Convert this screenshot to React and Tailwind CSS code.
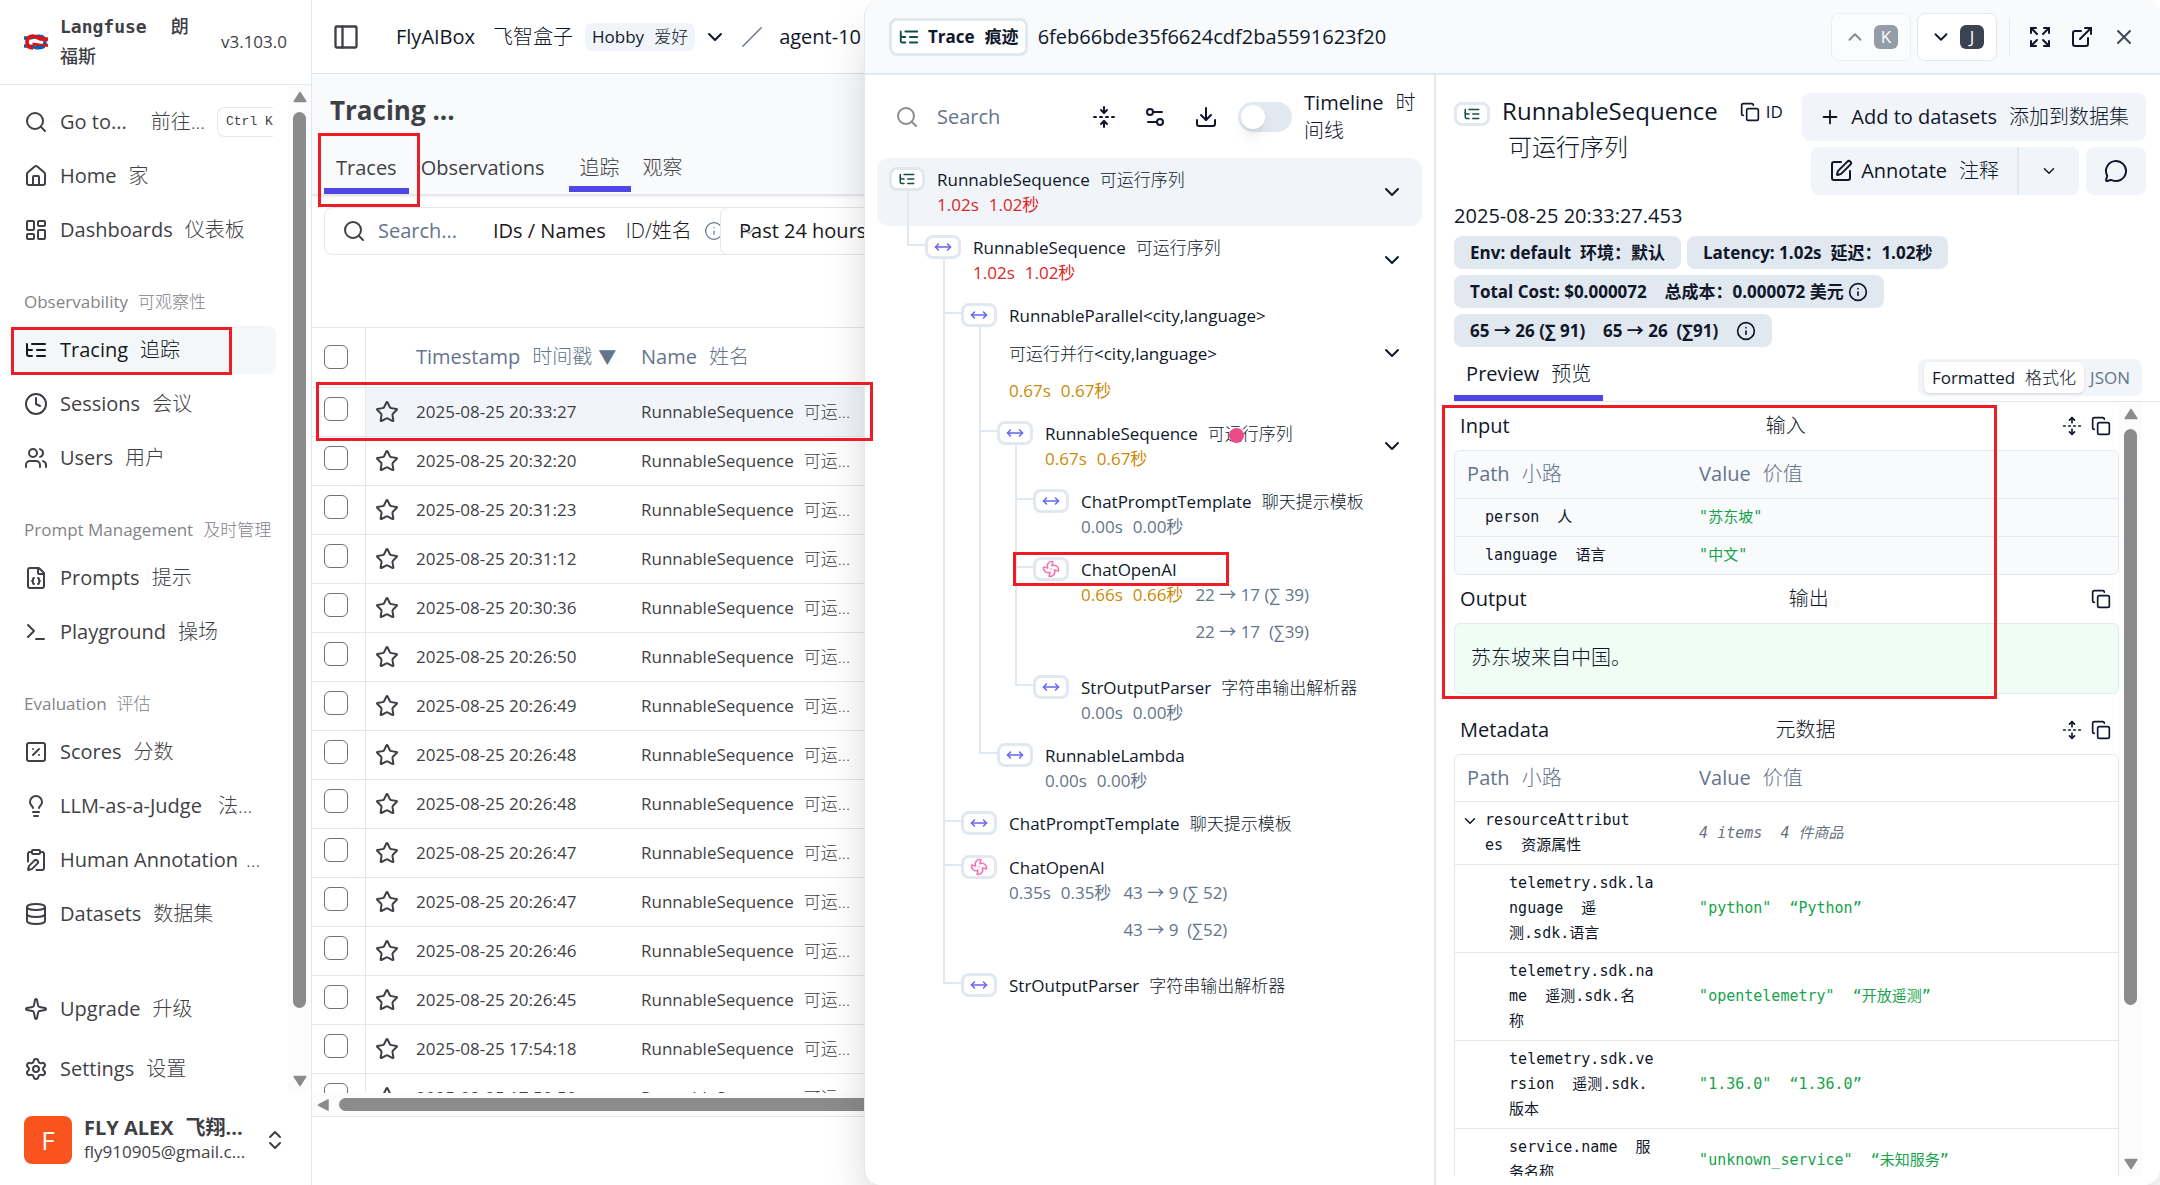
import React from "react";
import {
  Search, House, LayoutDashboard, Clock, Users, FileJson, Terminal, SquarePercent, Lightbulb,
  ClipboardPen, Database, Sparkle, Settings, ChevronsUpDown, PanelLeft, ChevronDown, ChevronUp,
  Slash, Star, FoldVertical, UnfoldVertical, Settings2, Download, Copy, Expand, ExternalLink, X,
  Plus, SquarePen, MessageCircle, Info, MoveHorizontal, Fan,
} from "lucide-react";

function TreeIcon({ size = 24, strokeWidth = 2, className = "" }) {
  return (
    <svg width={size} height={size} viewBox="0 0 24 24" fill="none" stroke="currentColor" strokeWidth={strokeWidth} strokeLinecap="round" strokeLinejoin="round" className={"shrink-0 " + className} aria-hidden="true">
      <path d="M21 12h-8" />
      <path d="M21 6H8" />
      <path d="M21 18h-8" />
      <path d="M3 6v4c0 1.1.9 2 2 2h3" />
      <path d="M3 10v6c0 1.1.9 2 2 2h3" />
    </svg>
  );
}

function Logo() {
  return (
    <svg width="24" height="16" viewBox="0 0 24 16" fill="none" className="shrink-0" aria-hidden="true">
      <path d="M0 4h3.500C10 4 10 2.200 15 2.200c4 0 6 2.300 6 5.800s-2 5.800-6 5.800C10 13.800 10 12 3.500 12H0" stroke="#0f5fae" strokeWidth="3.600" />
      <path d="M24 5.200h-4.500C14 5.200 13 2.200 9 2.200 5 2.200 3 4.500 3 8s2 5.800 6 5.800" stroke="#e11312" strokeWidth="3.800" />
      <path d="M8.500 10.200C12 9.600 13 10.800 16 11.200h8" stroke="#e11312" strokeWidth="3" />
      <path d="M7 7.800h9" stroke="#fff" strokeWidth="1.600" />
      <path d="M12 13.600c3.500-.2 5.500-.8 7-2" stroke="#0f5fae" strokeWidth="2.600" />
    </svg>
  );
}

function Bi({ en, zh, gap = "ml-3", weight = "font-light" }) {
  return (
    <span className="whitespace-nowrap">
      <span>{en}</span>
      <span className={gap + " " + weight}>{zh}</span>
    </span>
  );
}

function Triangle({ dir }) {
  const d = {
    up: "M7 1.500 12.800 10.500H1.200Z",
    down: "M7 10.500 1.200 1.500h11.600Z",
    left: "M1.500 6 11 .8v10.400Z",
  }[dir];
  return (
    <svg width="14" height="12" viewBox="0 0 14 12" className="shrink-0" aria-hidden="true">
      <path d={d} fill="#8b8b8b" stroke="#8b8b8b" strokeWidth="1.500" strokeLinejoin="round" />
    </svg>
  );
}

function VScroll({ thumb }) {
  return (
    <div className="flex w-[23px] shrink-0 flex-col items-center bg-[#fcfcfc] py-1.5">
      <Triangle dir="up" />
      <div className="flex w-full flex-1 justify-center pt-[9px]">
        <div className={"w-[13px] rounded-full bg-[#8b8b8b] " + thumb} />
      </div>
      <Triangle dir="down" />
    </div>
  );
}

function NavItem({ icon: Icon, en, zh, gap, active, kbd }) {
  return (
    <a href="#" className={"flex h-12 items-center gap-3 overflow-hidden rounded-lg px-3 text-[20px] " + (active ? "bg-[#f3f7fa] text-[#18181b]" : "text-[#3f3f46]") + (kbd ? " pr-0" : "")}>
      <Icon size={24} strokeWidth={2} className="shrink-0" />
      <Bi en={en} zh={zh} gap={gap} />
      {kbd && (
        <kbd className="flex h-[30px] shrink-0 items-center whitespace-nowrap rounded-l-lg border border-r-0 border-[#e2e8f0] pl-2 font-['Liberation_Mono',monospace] text-[13px]">Ctrl K</kbd>
      )}
    </a>
  );
}

function GroupLabel({ en, zh }) {
  return <div className="flex h-12 items-center px-3 text-[17px] text-[#838387]"><Bi en={en} zh={zh} gap="ml-2.5" /></div>;
}

function Sidebar() {
  return (
    <aside className="flex w-[312px] shrink-0 flex-col border-r border-[#e2e8f0] bg-white">
      <div className="flex h-[85px] shrink-0 items-center border-b border-[#e2e8f0] px-6">
        <Logo />
        <div className="ml-3 w-[140px] font-['DejaVu_Sans_Mono','Noto_Sans_CJK_SC',monospace] text-[18px] font-bold leading-[30px] text-[#3f3f46]">
          Langfuse<span className="ml-6 font-medium">朗</span><br /><span className="font-medium">福斯</span>
        </div>
        <span className="ml-[21px] text-[17px] text-[#3f3f46]">v3.103.0</span>
      </div>
      <div className="flex min-h-0 flex-1">
        <nav className="flex min-w-0 flex-1 flex-col pl-3 pr-3 pt-[13px]">
          <div className="flex flex-col gap-1.5">
            <NavItem icon={Search} en="Go to..." zh="前往..." gap="ml-6" kbd />
            <NavItem icon={House} en="Home" zh="家" />
            <NavItem icon={LayoutDashboard} en="Dashboards" zh="仪表板" />
          </div>
          <div className="pt-6"><GroupLabel en="Observability" zh="可观察性" /></div>
          <div className="flex flex-col gap-1.5">
            <NavItem icon={TreeIcon} en="Tracing" zh="追踪" active />
            <NavItem icon={Clock} en="Sessions" zh="会议" />
            <NavItem icon={Users} en="Users" zh="用户" />
          </div>
          <div className="pt-6"><GroupLabel en="Prompt Management" zh="及时管理" /></div>
          <div className="flex flex-col gap-1.5">
            <NavItem icon={FileJson} en="Prompts" zh="提示" />
            <NavItem icon={Terminal} en="Playground" zh="操场" />
          </div>
          <div className="pt-6"><GroupLabel en="Evaluation" zh="评估" /></div>
          <div className="flex flex-col gap-1.5">
            <NavItem icon={SquarePercent} en="Scores" zh="分数" />
            <NavItem icon={Lightbulb} en="LLM-as-a-Judge" zh="法..." gap="ml-4" />
            <NavItem icon={ClipboardPen} en="Human Annotation" zh="..." gap="ml-2" weight="font-normal" />
            <NavItem icon={Database} en="Datasets" zh="数据集" />
          </div>
          <div className="mt-auto flex flex-col gap-3">
            <NavItem icon={Sparkle} en="Upgrade" zh="升级" />
            <NavItem icon={Settings} en="Settings" zh="设置" />
          </div>
        </nav>
        <VScroll thumb="h-[93%]" />
      </div>
      <div className="flex h-[92px] shrink-0 items-center pl-6 pr-6 pt-0.5">
        <div className="flex size-12 items-center justify-center rounded-lg bg-[#f9531e] text-[26px] text-white">F</div>
        <div className="ml-3 text-[#3f3f46]">
          <div className="text-[20px] font-bold leading-6"><Bi en="FLY ALEX" zh="飞翔..." weight="font-bold" /></div>
          <div className="text-[17px] leading-6">fly910905@gmail.c...</div>
        </div>
        <ChevronsUpDown size={24} className="ml-auto text-[#3f3f46]" />
      </div>
    </aside>
  );
}

const TIMES = [
  "2025-08-25 20:33:27", "2025-08-25 20:32:20", "2025-08-25 20:31:23", "2025-08-25 20:31:12",
  "2025-08-25 20:30:36", "2025-08-25 20:26:50", "2025-08-25 20:26:49", "2025-08-25 20:26:48",
  "2025-08-25 20:26:48", "2025-08-25 20:26:47", "2025-08-25 20:26:47", "2025-08-25 20:26:46",
  "2025-08-25 20:26:45", "2025-08-25 17:54:18", "2025-08-25 17:50:50",
];

function Check({ label }) {
  return <input type="checkbox" aria-label={label} className="block size-6 appearance-none rounded-md border border-[#71717a] bg-white" />;
}

function Main() {
  return (
    <main className="flex min-w-0 flex-1 flex-col overflow-hidden bg-white">
      <header className="flex h-[74px] shrink-0 items-center border-b border-[#e2e8f0] pl-5 text-[20px] text-[#0f172a]">
        <button aria-label="Toggle sidebar" className="text-[#3f3f46]"><PanelLeft size={28} strokeWidth={2} className="[&_rect]:[rx:1]" /></button>
        <span className="ml-9"><Bi en="FlyAIBox" zh="飞智盒子" gap="ml-[18px]" /></span>
        <span className="ml-3 flex h-7 items-center rounded-lg bg-[#f1f5f9] px-[7px] text-[17px]"><Bi en="Hobby" zh="爱好" gap="ml-2.5" /></span>
        <ChevronDown size={24} className="ml-2" />
        <Slash size={22} strokeWidth={1.500} className="ml-3.5 text-[#64748b]" />
        <span className="ml-4 whitespace-nowrap">agent-10</span>
      </header>
      <div className="flex h-[121px] shrink-0 flex-col justify-between border-b border-[#e2e8f0] bg-[#f8fafc] pl-3 pt-[18px] shadow-sm">
        <h1 className="pl-1.5 text-[26px] font-bold leading-9 text-[#3f3f46]">Tracing ...</h1>
        <div className="flex h-[54px] text-[20px] text-[#3f3f46]">
          <button className="border-b-[6px] border-[#4f46e5] px-3 pt-[7px]">Traces</button>
          <button className="border-b-[6px] border-transparent px-3 pt-[7px]">Observations</button>
          <button className="ml-3 h-[52px] border-b-[6px] border-[#4f46e5] px-[11px] pt-[9px] font-light">追踪</button>
          <button className="h-[52px] border-b-[6px] border-transparent px-3 pt-[9px] font-light">观察</button>
        </div>
      </div>
      <div className="flex h-[132px] shrink-0 items-start pl-3 pt-3">
        <div className="flex h-12 w-[420px] shrink-0 items-center rounded-l-lg border border-[#e2e8f0] pl-[17px] text-[20px] text-[#18181b]">
          <Search size={24} className="shrink-0 text-[#3f3f46]" />
          <input aria-label="Search traces" placeholder="Search..." className="ml-3 w-[115px] bg-transparent outline-none placeholder:text-[#64748b]" />
          <Bi en="IDs / Names" zh="ID/姓名" gap="ml-5" />
          <Info size={20} strokeWidth={1.500} className="ml-3 shrink-0 text-[#64748b]" />
        </div>
        <button className="relative -ml-6 flex h-12 w-[260px] items-center rounded-l-lg border border-[#e2e8f0] bg-white pl-[18px] text-[20px] text-[#18181b]">
          <ChevronDown size={20} className="absolute left-[18px] text-[#a1a1aa]" />
          <span className="relative">Past 24 hours</span>
        </button>
      </div>
      <div className="h-[766px] shrink-0 overflow-hidden border-t border-[#e2e8f0]">
        <table className="w-full table-fixed border-collapse">
          <thead>
            <tr className="h-[59px] border-b border-[#e2e8f0] text-left text-[20px] text-[#64748b]">
              <th className="w-[53px] border-r border-[#e2e8f0] pl-3"><Check label="Select all" /></th>
              <th className="w-[51px]" aria-label="Bookmark" />
              <th className="w-[225px] whitespace-nowrap font-normal"><Bi en="Timestamp" zh="时间戳" /><span className="ml-1.5 text-[18px]">▼</span></th>
              <th className="font-normal"><Bi en="Name" zh="姓名" /></th>
            </tr>
          </thead>
          <tbody>
            {TIMES.map((t, i) => (
              <tr key={i} className="h-[49px] border-b border-[#e2e8f0] text-[17px] text-[#3f3f46]">
                <td className="border-r border-[#e2e8f0] pb-1.5 pl-3"><Check label={"Select trace " + t} /></td>
                <td className={"pl-[9px] " + (i === 0 ? "bg-[#f1f5f9]" : "")}><button aria-label="Bookmark trace" className="block"><Star size={24} /></button></td>
                <td className={i === 0 ? "bg-[#f1f5f9]" : ""}>{t}</td>
                <td className={i === 0 ? "bg-[#f1f5f9]" : ""}><Bi en="RunnableSequence" zh="可运..." gap="ml-2.5" /></td>
              </tr>
            ))}
          </tbody>
        </table>
      </div>
      <div className="flex h-6 shrink-0 items-center gap-2 border-b border-[#e2e8f0] bg-[#fcfcfc] pl-[5px]">
        <Triangle dir="left" />
        <div className="h-[13px] flex-1 rounded-full bg-[#8b8b8b]" />
      </div>
    </main>
  );
}

const RED = "text-[#dc2626]";
const AMBER = "text-[#ca8a04]";
const GRAY = "text-[#64748b]";

/* Guides: "|" passes through, "+" branches, "L" ends, " " is empty. */
const NODES = [
  { g: "", kind: "trace", en: "RunnableSequence", zh: "可运行序列", t: "1.02", c: RED, kids: true, sel: true },
  { g: "L", en: "RunnableSequence", zh: "可运行序列", t: "1.02", c: RED, kids: true },
  { g: " +", en: "RunnableParallel<city,language>", below: ["可运行并行", "<city,language>"], t: "0.67", c: AMBER, kids: true },
  { g: " |+", en: "RunnableSequence", zh: "可运行序列", t: "0.67", c: AMBER, kids: true },
  { g: " ||+", en: "ChatPromptTemplate", zh: "聊天提示模板", t: "0.00", c: GRAY },
  { g: " ||+", kind: "gen", en: "ChatOpenAI", t: "0.66", c: AMBER, tok: ["22 → 17 (∑ 39)", "22 → 17  (∑39)"] },
  { g: " ||L", en: "StrOutputParser", zh: "字符串输出解析器", t: "0.00", c: GRAY },
  { g: " |L", en: "RunnableLambda", t: "0.00", c: GRAY },
  { g: " +", en: "ChatPromptTemplate", zh: "聊天提示模板" },
  { g: " +", kind: "gen", en: "ChatOpenAI", t: "0.35", c: GRAY, tok: ["43 → 9 (∑ 52)", "43 → 9  (∑52)"] },
  { g: " L", en: "StrOutputParser", zh: "字符串输出解析器" },
];

function Guide({ type }) {
  return (
    <div className="flex w-9 shrink-0 flex-col self-stretch pl-[18px]">
      {(type === "+" || type === "L") && <div className="h-5 border-b-2 border-l-2 border-[#e2e8f0]" />}
      {(type === "+" || type === "|") && <div className="flex-1 border-l-2 border-[#e2e8f0]" />}
    </div>
  );
}

function KindBadge({ kind }) {
  return (
    <span className="flex h-6 w-9 shrink-0 items-center justify-center rounded-lg border-[3px] border-[#e2e8f0] bg-white">
      {kind === "trace" ? <TreeIcon size={18} className="text-[#134e4a]" />
        : kind === "gen" ? <Fan size={18} className="text-[#f472b6]" />
        : <MoveHorizontal size={18} className="text-[#6366f1]" />}
    </span>
  );
}

function Node({ n }) {
  return (
    <li className={"flex rounded-xl pl-3 pr-[18px] text-[17px] text-[#0f172a] " + (n.sel ? "bg-[#f1f5f9]" : "")}>
      {[...n.g].map((t, i) => <Guide key={i} type={t} />)}
      <div className="flex w-9 shrink-0 flex-col pt-[9px]">
        <KindBadge kind={n.kind} />
        {n.kids && <div className="ml-[18px] flex-1 border-l-2 border-[#e2e8f0]" />}
      </div>
      <div className={"ml-3 flex-1 whitespace-nowrap pt-[9px] " + (n.tok ? "pb-[22px]" : "pb-[9px]")}>
        <div className="leading-[26px]">{n.zh ? <Bi en={n.en} zh={n.zh} gap="ml-2.5" /> : n.en}</div>
        {n.below && <div className="py-1.5 leading-[38px]"><span className="font-light">{n.below[0]}</span>{n.below[1]}</div>}
        {n.t && (
          <div className={"flex leading-6 " + n.c}>
            <Bi en={n.t + "s"} zh={n.t + "秒"} gap="ml-2.5" weight="font-normal" />
            {n.tok && (
              <div className={"ml-3 whitespace-pre " + GRAY}>
                <div>{n.tok[0]}</div>
                <div className="pt-[13px]">{n.tok[1]}</div>
              </div>
            )}
          </div>
        )}
      </div>
      {n.kids && <button aria-label={"Collapse " + n.en} className="self-center"><ChevronDown size={24} /></button>}
    </li>
  );
}

function TreePane() {
  return (
    <section className="flex w-[44.1%] shrink-0 flex-col border-r-2 border-[#e2e8f0] pl-3 pr-3">
      <div className="flex h-[83px] shrink-0 items-center pl-[18px] text-[20px] text-[#0f172a]">
        <Search size={24} className="shrink-0 text-[#8b8b92]" />
        <input aria-label="Search nodes" placeholder="Search" className="ml-[18px] w-0 min-w-0 flex-1 bg-transparent outline-none placeholder:text-[#64748b]" />
        <div className="flex items-center gap-[27px]">
          <button aria-label="Collapse all"><FoldVertical size={24} /></button>
          <button aria-label="View options"><Settings2 size={24} /></button>
          <button aria-label="Download"><Download size={24} /></button>
        </div>
        <input id="timeline" type="checkbox" role="switch" className="ml-5 h-[30px] w-[54px] shrink-0 appearance-none rounded-full bg-[#e2e8f0] before:ml-[3px] before:mt-[3px] before:block before:size-6 before:rounded-full before:bg-white before:shadow-lg before:content-['']" />
        <label htmlFor="timeline" className="ml-3 w-[118px] text-[20px] leading-7"><span>Timeline</span><span className="ml-3 font-light">时</span><br /><span className="font-light">间线</span></label>
      </div>
      <ul>{NODES.map((n, i) => <Node key={i} n={n} />)}</ul>
    </section>
  );
}

function Pill({ children }) {
  return <span className="flex h-[33px] items-center whitespace-pre rounded-lg bg-[#e2e8f0] px-4 text-[17px] font-bold text-[#0f172a]">{children}</span>;
}

function SectionHead({ en, zh, fold }) {
  return (
    <div className="flex h-12 items-center justify-between pl-1.5 pr-2 text-[20px]">
      <h3>{en}</h3>
      <span className="font-light">{zh}</span>
      <div className="flex gap-[9px]">
        {fold && <button aria-label={"Expand " + en}><UnfoldVertical size={20} /></button>}
        <button aria-label={"Copy " + en}><Copy size={20} /></button>
      </div>
    </div>
  );
}

function JsonTable({ rows, shade }) {
  return (
    <div className={"overflow-hidden rounded-md border border-[#e2e8f0] " + (shade ? "bg-[#f8fafc]" : "bg-white")}>
      <table className="w-full table-fixed border-collapse">
        <thead>
          <tr className="h-[47px] text-left text-[20px] text-[#64748b]">
            <th className="w-[35%] pl-3 font-normal"><Bi en="Path" zh="小路" /></th>
            <th className="pl-3 font-normal"><Bi en="Value" zh="价值" /></th>
          </tr>
        </thead>
        <tbody className="font-['DejaVu_Sans_Mono','Noto_Sans_CJK_SC',monospace] text-[15px] leading-[25px]">
          {rows.map((r, i) => (
            <tr key={i} className="border-t border-[#e2e8f0]">
              <td className={"whitespace-pre py-1.5 " + (r.deep ? "pl-[54px]" : "pl-[30px]")}>
                <div className="flex">
                  {r.open && <button aria-label="Collapse resourceAttributes" className="-ml-6 mr-1.5 self-start pt-1"><ChevronDown size={18} /></button>}
                  <span>{r.path}</span>
                </div>
              </td>
              <td className={"whitespace-pre pl-3 " + (r.muted ? "italic text-[#6b7280]" : "text-[#16a34a]")}>{r.value}</td>
            </tr>
          ))}
        </tbody>
      </table>
    </div>
  );
}

const INPUT = [
  { path: "person  人", value: "\"苏东坡\"" },
  { path: "language  语言", value: "\"中文\"" },
];
const META = [
  { path: "resourceAttribut\nes  资源属性", value: "4 items  4 件商品", muted: true, open: true },
  { path: "telemetry.sdk.la\nnguage  遥\n测.sdk.语言", value: "\"python\"  “Python”", deep: true },
  { path: "telemetry.sdk.na\nme  遥测.sdk.名\n称", value: "\"opentelemetry\"  “开放遥测”", deep: true },
  { path: "telemetry.sdk.ve\nrsion  遥测.sdk.\n版本", value: "\"1.36.0\"  “1.36.0”", deep: true },
  { path: "service.name  服\n务名称", value: "\"unknown_service\"  “未知服务”", deep: true },
];

function DetailPane() {
  const btn = "flex h-12 items-center bg-[#f1f5f9]";
  return (
    <section className="flex min-w-0 flex-1 flex-col pl-[18px] text-[#0f172a]">
      <div className="flex h-[127px] shrink-0 items-start pr-3.5 pt-[18px]">
        <div className="mt-[9px]"><KindBadge kind="trace" /></div>
        <h2 className="ml-3 text-[24px] leading-9">RunnableSequence<br /><span className="ml-1.5 font-light">可运行序列</span></h2>
        <button className="ml-[22px] mt-1.5 flex items-center gap-1.5 text-[17px]"><Copy size={20} />ID</button>
        <div className="ml-auto flex flex-col items-end gap-1.5">
          <button className={btn + " gap-2.5 rounded-lg px-[17px] text-[20px]"}><Plus size={22} /><Bi en="Add to datasets" zh="添加到数据集" /></button>
          <div className="flex gap-[7px]">
            <button className={btn + " gap-2 rounded-l-lg border-r-2 border-[#e2e8f0] px-[18px] text-[20px]"}><SquarePen size={24} /><Bi en="Annotate" zh="注释" /></button>
            <button aria-label="Annotation options" className={btn + " -ml-[7px] w-[60px] justify-center rounded-r-lg"}><ChevronDown size={18} /></button>
            <button aria-label="Comments" className={btn + " w-[60px] justify-center rounded-lg"}><MessageCircle size={24} /></button>
          </div>
        </div>
      </div>
      <div className="text-[20px] leading-7">2025-08-25 20:33:27.453</div>
      <div className="flex flex-col gap-1.5 pt-1.5">
        <div className="flex gap-1.5">
          <Pill>Env: default  环境：默认</Pill>
          <Pill>Latency: 1.02s  延迟：1.02秒</Pill>
        </div>
        <div className="flex"><Pill>{"Total Cost: $0.000072    总成本：0.000072 美元 "}<Info size={20} /></Pill></div>
        <div className="flex"><Pill>{"65 → 26 (∑ 91)    65 → 26  (∑91)    "}<Info size={20} /></Pill></div>
      </div>
      <div className="flex h-[55px] shrink-0 items-end justify-between border-b border-[#e2e8f0] pr-[18px]">
        <button className="h-12 border-b-[6px] border-[#4f46e5] px-3 text-[20px]"><Bi en="Preview" zh="预览" /></button>
        <div className="mb-[5px] flex h-[37px] items-center rounded-lg bg-[#f1f5f9] px-1.5 text-[17px]">
          <button className="h-[31px] rounded-md bg-white px-2 shadow-sm"><Bi en="Formatted" zh="格式化" gap="ml-2.5" /></button>
          <button className="px-1.5 text-[#64748b]">JSON</button>
        </div>
      </div>
      <div className="mb-[9px] flex min-h-0 flex-1 pr-[18px]">
        <div className="min-w-0 flex-1 overflow-hidden">
          <SectionHead en="Input" zh="输入" fold />
          <JsonTable rows={INPUT} shade />
          <SectionHead en="Output" zh="输出" />
          <div className="flex h-[71px] items-center rounded-md border border-[#e2e8f0] bg-[#f0fdf4] pl-4 text-[20px] font-light">苏东坡来自中国。</div>
          <div className="pt-3"><SectionHead en="Metadata" zh="元数据" fold /></div>
          <JsonTable rows={META} />
        </div>
        <VScroll thumb="h-[79%]" />
      </div>
    </section>
  );
}

function Drawer() {
  return (
    <div className="absolute inset-y-0 right-0 flex w-[60%] flex-col overflow-hidden rounded-2xl border-l border-[#e2e8f0] bg-white shadow-2xl">
      <header className="flex h-[75px] shrink-0 items-center border-b-2 border-[#e2e8f0] bg-[#f8fafc] pl-6 pr-6 text-[20px] text-[#0f172a]">
        <span className="flex h-[38px] items-center gap-2 rounded-lg border-[3px] border-[#e2e8f0] bg-white px-1.5 text-[17px] font-bold">
          <TreeIcon size={22} className="text-[#134e4a]" /><Bi en="Trace" zh="痕迹" gap="ml-2.5" weight="font-bold" />
        </span>
        <span className="ml-2.5">6feb66bde35f6624cdf2ba5591623f20</span>
        <div className="ml-auto flex items-center">
          <button className="flex h-12 w-20 items-center justify-center gap-2 rounded-lg border border-[#e2e8f0] bg-white opacity-50"><ChevronUp size={22} /><kbd className="flex size-6 items-center justify-center rounded-md bg-[#334155] font-['Open_Sans',sans-serif] text-[17px] text-white">K</kbd></button>
          <button className="ml-1.5 flex h-12 w-20 items-center justify-center gap-2 rounded-lg border border-[#e2e8f0] bg-white"><ChevronDown size={22} /><kbd className="flex size-6 items-center justify-center rounded-md bg-[#3b4252] font-['Open_Sans',sans-serif] text-[17px] text-white">J</kbd></button>
          <span className="ml-3 h-9 border-l border-[#e2e8f0]" />
          <button aria-label="Full screen" className="ml-[18px]"><Expand size={24} /></button>
          <button aria-label="Open in new tab" className="ml-[18px]"><ExternalLink size={24} /></button>
          <button aria-label="Close" className="ml-[18px]"><X size={24} className="text-[#3f4654]" /></button>
        </div>
      </header>
      <div className="flex min-h-0 flex-1">
        <TreePane />
        <DetailPane />
      </div>
    </div>
  );
}

function Marks() {
  const box = "absolute border-[3px] border-[#ee1c25] ";
  return (
    <div className="pointer-events-none absolute inset-0">
      <div className={box + "left-[11px] top-[327px] h-12 w-[221px]"} />
      <div className={box + "left-[318px] top-[133px] h-[74px] w-[102px]"} />
      <div className={box + "left-[316px] top-[382px] h-[59px] w-[557px]"} />
      <div className={box + "left-[1013px] top-[552px] h-[34px] w-[216px]"} />
      <div className={box + "left-[1442px] top-[405px] h-[294px] w-[555px]"} />
      <div className="absolute left-[1229px] top-[428px] size-[15px] rounded-full bg-[#e94c89]" />
    </div>
  );
}

export default function App() {
  return (
    <div className="relative flex h-screen w-full overflow-hidden bg-white font-['Open_Sans','Noto_Sans_CJK_SC',sans-serif]">
      <Sidebar />
      <Main />
      <Drawer />
      <Marks />
    </div>
  );
}
